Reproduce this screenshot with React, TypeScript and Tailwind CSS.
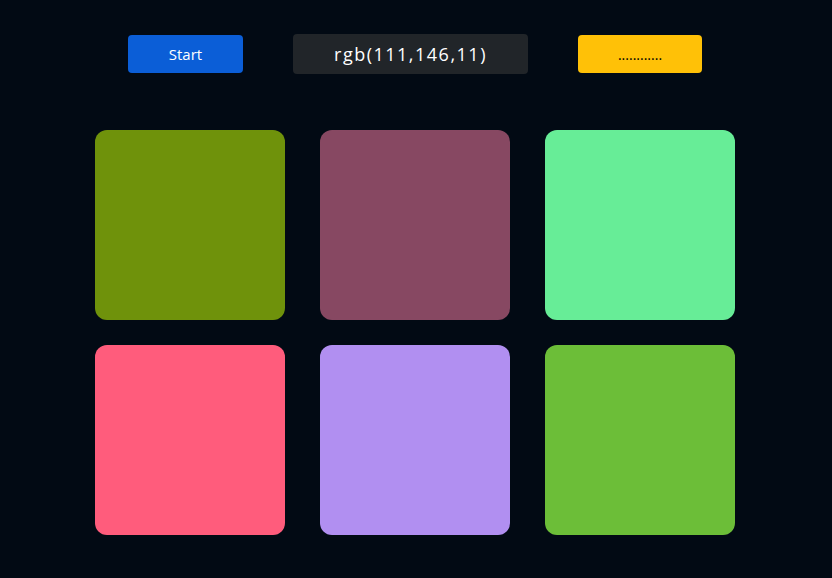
const colors = [
  'rgb(111,146,11)',
  'rgb(135,72,98)',
  'rgb(103,237,151)',
  'rgb(255,92,124)',
  'rgb(177,143,241)',
  'rgb(108,190,56)',
]

export default function App() {
  return (
    <div className="min-h-[578px] w-full bg-[#020a14] font-['Open_Sans',sans-serif]">
      <div className="flex items-center gap-[50px] pl-[128px] pt-[34px]">
        <button
          type="button"
          className="h-[38px] w-[115px] rounded-[4px] bg-[#0b5ed7] text-[15px] text-white"
        >
          Start
        </button>
        <div className="flex h-[40px] w-[235px] items-center justify-center rounded-[4px] bg-[#212529] text-[18px] tracking-[1.5px] text-white">
          rgb(111,146,11)
        </div>
        <button
          type="button"
          className="h-[38px] w-[124px] rounded-[4px] bg-[#ffc107] text-[14px] text-black"
        >
          ............
        </button>
      </div>
      <div className="mt-[56px] grid grid-cols-[repeat(3,190px)] gap-x-[35px] gap-y-[25px] pl-[95px]">
        {colors.map((c) => (
          <div key={c} className="h-[190px] w-[190px] rounded-[12px]" style={{ backgroundColor: c }} />
        ))}
      </div>
    </div>
  )
}
